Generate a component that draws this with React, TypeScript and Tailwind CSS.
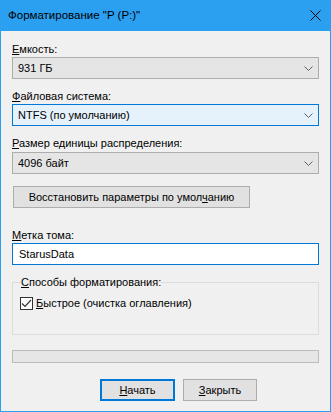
import React from "react";

const Chevron = () => (
    <svg width="9" height="5" viewBox="0 0 9 5" className="shrink-0">
        <polyline points="0.5,0.5 4.5,4.5 8.5,0.5" fill="none" stroke="#606060" strokeWidth="1" />
    </svg>
);

const Combo = ({value, focused}: {value: string; focused?: boolean}) => (
    <div
        className={
            focused
                ? "h-[22px] flex items-center justify-between pl-[5px] pr-[5px] border border-[#0078d7] bg-[#e5f1fb]"
                : "h-[22px] flex items-center justify-between pl-[5px] pr-[5px] border border-[#adadad] bg-[#e5e5e5]"
        }
    >
        <span>{value}</span>
        <Chevron />
    </div>
);

const App = () => {
    return (
        <div
            className="w-[331px] h-[412px] flex flex-col bg-[#f0f0f0] border border-t-0 border-[#2b9ff0] text-[11px] leading-[15px] text-black"
            style={{fontFamily: '"Liberation Sans", Arial, sans-serif'}}
        >
            {/* title bar */}
            <div className="h-[31px] shrink-0 bg-[#2b9ff0] flex items-center justify-between pl-[8px] pr-[10px] -mx-px text-[11.5px]">
                <span>Форматирование "P (P:)"</span>
                <svg width="11" height="11" viewBox="0 0 11 11">
                    <path d="M0.5 0.5 L10.5 10.5 M10.5 0.5 L0.5 10.5" stroke="#000" strokeWidth="1" />
                </svg>
            </div>

            <div className="flex flex-col px-[11px] pt-[11px]">
                <div><u>Е</u>мкость:</div>
                <Combo value="931 ГБ" />

                <div className="mt-[10px]"><u>Ф</u>айловая система:</div>
                <Combo value="NTFS (по умолчанию)" focused />

                <div className="mt-[10px]"><u>Р</u>азмер единицы распределения:</div>
                <div className="mt-px"><Combo value="4096 байт" /></div>

                <button className="mt-[12px] w-[237px] h-[22px] ml-px border border-[#adadad] bg-[#e1e1e1] flex items-center justify-center">
                    <span>Восстановить параметры по умол<u>ч</u>анию</span>
                </button>

                <div className="mt-[20px]"><u>М</u>етка тома:</div>
                <div className="h-[22px] flex items-center pl-[6px] border border-[#0078d7] bg-white">StarusData</div>

                <fieldset className="mt-[10px] h-[60px] border border-[#dcdcdc] px-[8px] pt-[6px] m-0">
                    <legend className="px-0 ml-0"><u>С</u>пособы форматирования:</legend>
                    <label className="flex items-center gap-[3px] -ml-[1px]">
                        <span className="w-[13px] h-[13px] border border-[#333333] bg-white flex items-center justify-center">
                            <svg width="11" height="9" viewBox="0 0 11 9">
                                <polyline points="1,4.5 4,7.5 10,1" fill="none" stroke="#333333" strokeWidth="1.2" />
                            </svg>
                        </span>
                        <span><u>Б</u>ыстрое (очистка оглавления)</span>
                    </label>
                </fieldset>

                <div className="mt-[15px] h-[13px] border border-[#bcbcbc] bg-[#e6e6e6]" />

                <div className="mt-[16px] flex gap-[8px] pl-[88px]">
                    <button className="w-[75px] h-[22px] border-2 border-[#0078d7] bg-[#e1e1e1] flex items-center justify-center">
                        <span><u>Н</u>ачать</span>
                    </button>
                    <button className="w-[74px] h-[22px] border border-[#adadad] bg-[#e1e1e1] flex items-center justify-center">
                        <span><u>З</u>акрыть</span>
                    </button>
                </div>
            </div>
        </div>
    );
};

export default App;
